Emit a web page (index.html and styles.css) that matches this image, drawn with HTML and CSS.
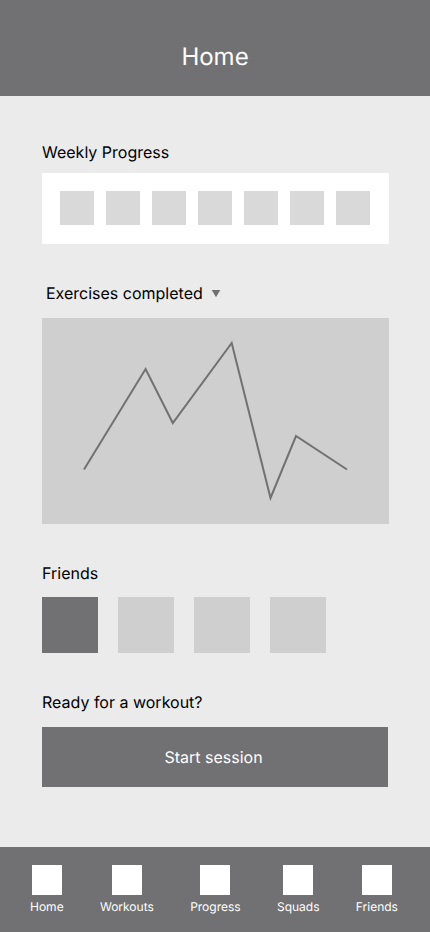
FILE: index.html
```html
<!DOCTYPE html>
<html lang="en">
<head>
<meta charset="utf-8">
<meta name="viewport" content="width=device-width, initial-scale=1">
<title>Home</title>
<link rel="stylesheet" href="styles.css">
</head>
<body>
<header class="header"><h1 class="title">Home</h1></header>
<main class="content">
  <section class="section section-week">
    <h2 class="heading">Weekly Progress</h2>
    <div class="week">
      <span class="day"></span><span class="day"></span><span class="day"></span><span class="day"></span><span class="day"></span><span class="day"></span><span class="day"></span>
    </div>
  </section>
  <section class="section section-chart">
    <div class="picker">
      <select class="select" aria-label="Chart metric"><option>Exercises completed</option></select>
      <svg class="arrow" viewBox="0 0 10 8" aria-hidden="true"><path d="M0.700 1H9.300L5 8.300Z"/></svg>
    </div>
    <div class="chart">
      <svg class="line" viewBox="0 0 347 206" aria-hidden="true"><path d="M42 151.500L103.600 51L130.800 105L189.700 25L228.500 180L254 118L305 151.500"/></svg>
    </div>
  </section>
  <section class="section section-friends">
    <h2 class="heading">Friends</h2>
    <div class="friends">
      <span class="friend friend-active"></span><span class="friend"></span><span class="friend"></span><span class="friend"></span>
    </div>
  </section>
  <section class="section section-start">
    <h2 class="heading">Ready for a workout?</h2>
    <button class="start" type="button">Start session</button>
  </section>
</main>
<nav class="nav">
  <a class="tab" href="#home"><span class="icon"></span>Home</a>
  <a class="tab" href="#workouts"><span class="icon"></span>Workouts</a>
  <a class="tab" href="#progress"><span class="icon"></span>Progress</a>
  <a class="tab" href="#squads"><span class="icon"></span>Squads</a>
  <a class="tab" href="#friends"><span class="icon"></span>Friends</a>
</nav>
</body>
</html>
```
FILE: styles.css
```css
* { box-sizing: border-box; }

body {
  margin: 0;
  min-height: 100vh;
  display: flex;
  flex-direction: column;
  background: #ebebeb;
  color: #000;
  font: 400 16px/20px Inter, sans-serif;
  text-rendering: geometricPrecision;
}

.header {
  padding: 41px 16px 23px;
  background: #717173;
  color: #fff;
  text-align: center;
}

.title {
  margin: 0;
  font-size: 24px;
  line-height: 32px;
  font-weight: 400;
}

.content {
  flex: 1;
  display: flex;
  flex-direction: column;
  gap: 39px;
  padding: 46px 41px 40px 42px;
}

.section {
  display: flex;
  flex-direction: column;
  gap: 15px;
}

.section-week { gap: 11px; }

.section-friends { gap: 14px; }

.heading {
  margin: 0;
  font-size: 16px;
  line-height: 20px;
  font-weight: 400;
}

.week {
  display: flex;
  justify-content: space-between;
  padding: 18px 19px 19px 18px;
  background: #fff;
}

.day {
  width: 34px;
  height: 34px;
  background: #d9d9d9;
}

.picker {
  display: flex;
  align-items: center;
  gap: 8px;
  padding-left: 4px;
}

.select {
  appearance: none;
  border: 0;
  padding: 0;
  background: none;
  color: inherit;
  font: inherit;
  text-rendering: inherit;
}

.arrow {
  width: 10px;
  height: 8px;
  overflow: visible;
  fill: #717173;
}

.chart { background: #cfcfcf; }

.line {
  display: block;
  width: 100%;
  fill: none;
  stroke: #717173;
  stroke-width: 2;
}

.friends {
  display: flex;
  gap: 20px;
}

.friend {
  width: 56px;
  height: 56px;
  background: #cfcfcf;
}

.friend-active { background: #717173; }

.start {
  height: 60px;
  margin-right: 1px;
  padding: 0 3px 0 0;
  border: 0;
  background: #717173;
  color: #fff;
  font: inherit;
  text-rendering: inherit;
}

.nav {
  display: flex;
  justify-content: space-between;
  padding: 18px 32px 17px 30px;
  background: #717173;
}

.tab {
  display: flex;
  flex-direction: column;
  align-items: center;
  gap: 4px;
  color: #fff;
  font-size: 12px;
  line-height: 16px;
  text-decoration: none;
}

.icon {
  width: 30px;
  height: 30px;
  background: #fff;
}
```
